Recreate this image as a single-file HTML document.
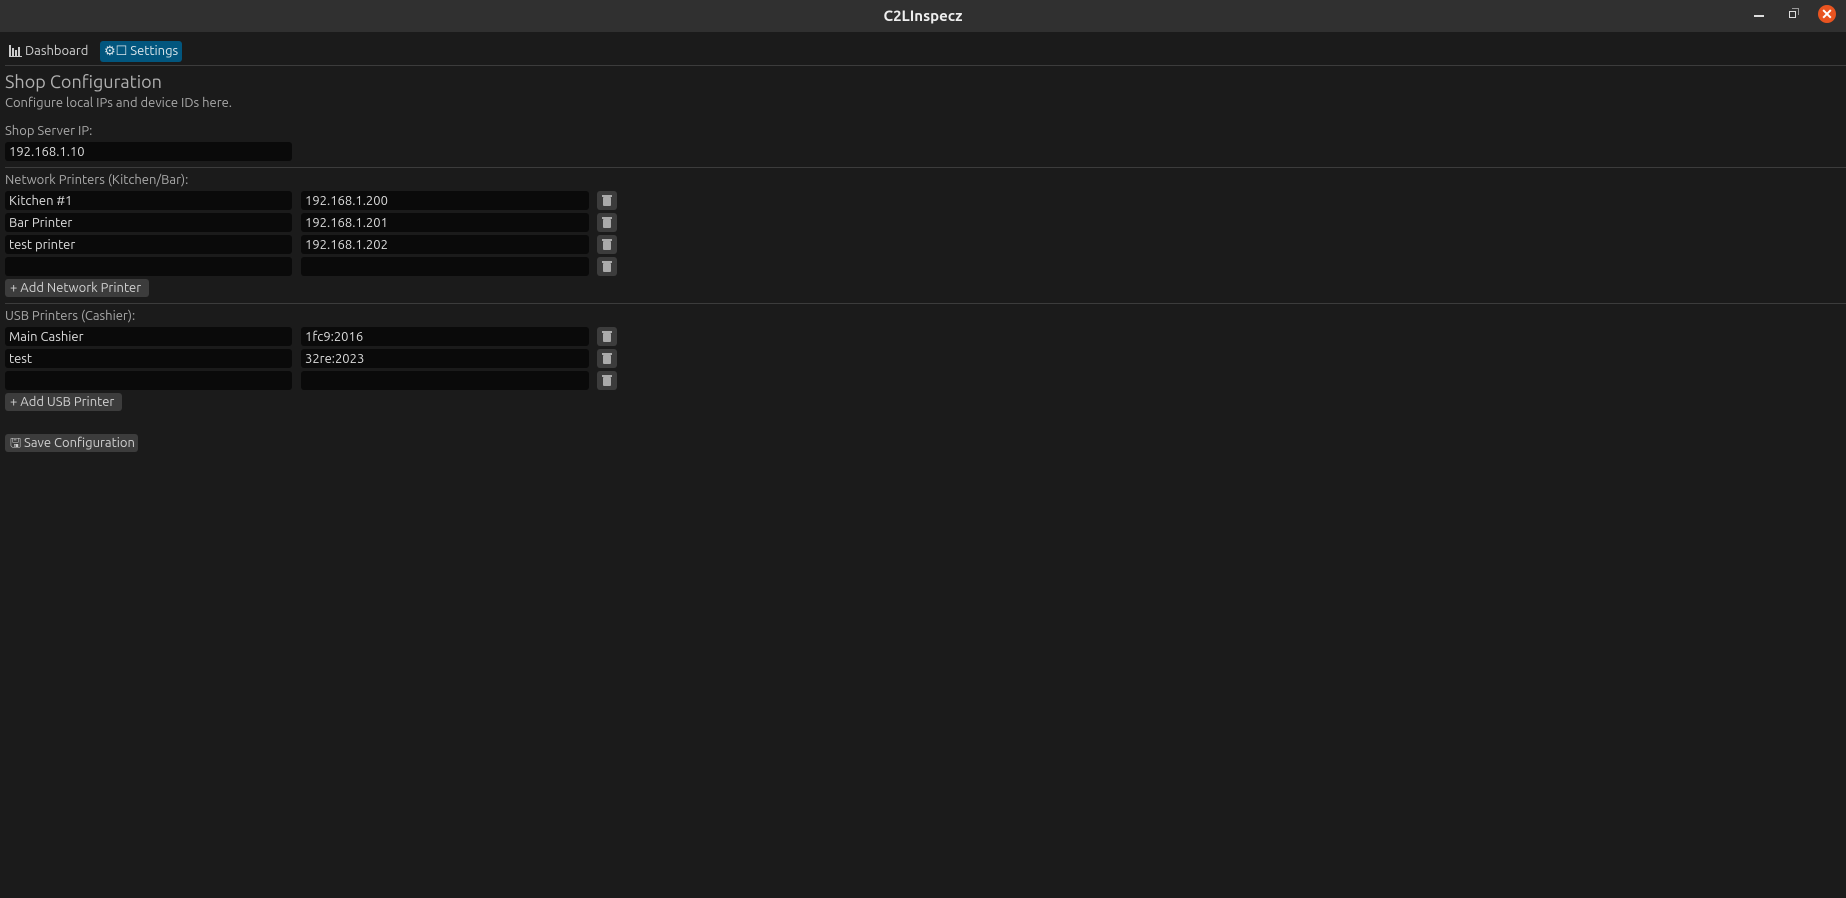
<!DOCTYPE html>
<html><head><meta charset="utf-8"><style>
*{box-sizing:border-box;margin:0;padding:0}
body{width:1846px;height:898px;background:#1b1b1b;font-family:"Ubuntu","Liberation Sans",sans-serif;color:#a8a8a8;position:relative;overflow:hidden;font-size:13px}
.tb{position:absolute;left:0;top:0;width:1846px;height:32px;background:#303030}
.title{position:absolute;top:7px;width:100%;text-align:center;color:#eee;font-weight:bold;font-size:15px}
.a{position:absolute;white-space:nowrap}
.in{position:absolute;background:#0a0a0a;border-radius:3px;color:#dcdcdc;padding-left:4px;line-height:20px;height:19px;font-size:13px}
.sep{position:absolute;left:5px;right:0;height:1px;background:#3c3c3c}
.btn{position:absolute;background:#3c3c3c;border-radius:3px;color:#cfcfcf;line-height:19px;height:18px;padding-left:5px;white-space:nowrap}
.tr{position:absolute;left:597px;width:20px;height:19px;background:#3c3c3c;border-radius:3px}
.tr:before{content:"";position:absolute;left:6px;top:6px;width:8px;height:9px;background:#aaa;border-radius:1px}
.tr:after{content:"";position:absolute;left:5px;top:4px;width:10px;height:2px;background:#aaa}
</style></head><body>
<div class="tb"><div class="title">C2LInspecz</div>
<div class="a" style="left:1754px;top:15px;width:10px;height:2px;background:#ddd"></div>
<div class="a" style="left:1789px;top:11px;width:7px;height:7px;border:1.5px solid #ddd"></div>
<div class="a" style="left:1792px;top:8px;width:7px;height:7px;border-top:1.5px solid #999;border-right:1.5px solid #999"></div>
<div class="a" style="left:1818px;top:5px;width:18px;height:18px;border-radius:50%;background:#e95420;color:#fff;text-align:center;line-height:18px;font-size:14px;font-weight:bold">✕</div>
</div>
<svg class="a" style="left:9px;top:45px" width="13" height="12" viewBox="0 0 13 12"><g fill="#ccc"><rect x="0" y="0" width="2" height="12"/><rect x="3" y="3" width="2" height="9"/><rect x="6" y="5" width="2" height="7"/><rect x="9" y="2" width="2" height="10"/><rect x="0" y="11" width="13" height="1"/></g></svg>
<div class="a" style="left:25px;top:44px;color:#cfcfcf">Dashboard</div>
<div class="a" style="left:100px;top:41px;width:82px;height:21px;background:#02567e;border-radius:3px;color:#d8e4ea;line-height:21px;padding-left:4px">⚙☐ Settings</div>
<div class="sep" style="top:65px"></div>
<div class="a" style="left:5px;top:72px;font-size:18px;color:#b0b0b0">Shop Configuration</div>
<div class="a" style="left:5px;top:96px">Configure local IPs and device IDs here.</div>
<div class="a" style="left:5px;top:124px">Shop Server IP:</div>
<div class="in" style="left:5px;top:142px;width:287px">192.168.1.10</div>
<div class="sep" style="top:167px"></div>
<div class="a" style="left:5px;top:173px">Network Printers (Kitchen/Bar):</div>
<div class="in" style="left:5px;top:191px;width:287px">Kitchen #1</div><div class="in" style="left:301px;top:191px;width:288px">192.168.1.200</div><div class="tr" style="top:191px"></div>
<div class="in" style="left:5px;top:213px;width:287px">Bar Printer</div><div class="in" style="left:301px;top:213px;width:288px">192.168.1.201</div><div class="tr" style="top:213px"></div>
<div class="in" style="left:5px;top:235px;width:287px">test printer</div><div class="in" style="left:301px;top:235px;width:288px">192.168.1.202</div><div class="tr" style="top:235px"></div>
<div class="in" style="left:5px;top:257px;width:287px"></div><div class="in" style="left:301px;top:257px;width:288px"></div><div class="tr" style="top:257px"></div>
<div class="btn" style="left:5px;top:279px;width:144px">+ Add Network Printer</div>
<div class="sep" style="top:303px"></div>
<div class="a" style="left:5px;top:309px">USB Printers (Cashier):</div>
<div class="in" style="left:5px;top:327px;width:287px">Main Cashier</div><div class="in" style="left:301px;top:327px;width:288px">1fc9:2016</div><div class="tr" style="top:327px"></div>
<div class="in" style="left:5px;top:349px;width:287px">test</div><div class="in" style="left:301px;top:349px;width:288px">32re:2023</div><div class="tr" style="top:349px"></div>
<div class="in" style="left:5px;top:371px;width:287px"></div><div class="in" style="left:301px;top:371px;width:288px"></div><div class="tr" style="top:371px"></div>
<div class="btn" style="left:5px;top:393px;width:117px">+ Add USB Printer</div>
<div class="btn" style="left:5px;top:434px;width:133px">🖫 Save Configuration</div>
</body></html>
